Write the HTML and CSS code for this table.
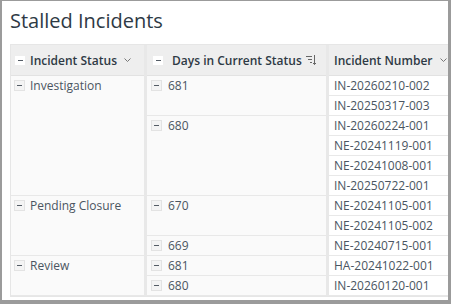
FILE: index.html
```html
<!DOCTYPE html>
<html>
<head>
<meta charset="utf-8">
<link rel="stylesheet" href="styles.css">
</head>
<body>
<div class="frame">
  <h1 class="title">Stalled Incidents</h1>
  <div class="grid">
    <div class="hd c1"><span class="tog"></span><span class="hd-label">Incident Status</span><svg class="chev" width="7" height="4" viewBox="0 0 7 4"><polyline points="0.5,0.5 3.5,3.5 6.5,0.5" fill="none" stroke="#777" stroke-width="1"/></svg></div>
    <div class="hd c2"><span class="tog"></span><span class="hd-label">Days in Current Status</span><svg class="sort" width="11" height="12" viewBox="0 0 11 12"><path d="M0 2.5H6M2 5.5H6M4 8.5H6" stroke="#666" stroke-width="1" fill="none"/><path d="M8.5 1V10.5M7 9L8.5 10.5L10 9" stroke="#666" stroke-width="1" fill="none"/></svg></div>
    <div class="hd c3"><span class="hd-label">Incident Number</span><svg class="chev3" width="7" height="4" viewBox="0 0 7 4"><polyline points="0.5,0.5 3.5,3.5 6.5,0.5" fill="none" stroke="#777" stroke-width="1"/></svg></div>

    <div class="cell c1 s6"><span class="tog"></span><span>Investigation</span></div>
    <div class="cell c1 s3"><span class="tog"></span><span>Pending Closure</span></div>
    <div class="cell c1 s2"><span class="tog"></span><span>Review</span></div>

    <div class="cell c2 s2"><span class="tog"></span><span>681</span></div>
    <div class="cell c2 s4"><span class="tog"></span><span>680</span></div>
    <div class="cell c2 s2"><span class="tog"></span><span>670</span></div>
    <div class="cell c2"><span class="tog"></span><span>669</span></div>
    <div class="cell c2"><span class="tog"></span><span>681</span></div>
    <div class="cell c2"><span class="tog"></span><span>680</span></div>

    <div class="cell c3">IN-20260210-002</div>
    <div class="cell c3">IN-20250317-003</div>
    <div class="cell c3">IN-20260224-001</div>
    <div class="cell c3">NE-20241119-001</div>
    <div class="cell c3">NE-20241008-001</div>
    <div class="cell c3">IN-20250722-001</div>
    <div class="cell c3">NE-20241105-001</div>
    <div class="cell c3">NE-20241105-002</div>
    <div class="cell c3">NE-20240715-001</div>
    <div class="cell c3">HA-20241022-001</div>
    <div class="cell c3">IN-20260120-001</div>
  </div>
</div>
</body>
</html>
```
FILE: styles.css
```css
html, body {
  margin: 0;
  padding: 0;
  background: #ffffff;
}
body {
  font-family: "Open Sans", "Noto Sans", sans-serif;
}
.frame {
  width: 451px;
  height: 304px;
  box-sizing: border-box;
  border-style: solid;
  border-color: #9b9b9b;
  border-width: 1px 3px 4px 2px;
  padding: 0 0 0 8px;
  overflow: hidden;
  background: #ffffff;
}
.title {
  margin: 6px 0 9px 0;
  font-size: 20px;
  font-weight: 400;
  line-height: 28px;
  color: #2e3a45;
}
.grid {
  display: grid;
  grid-template-columns: 133px 179px 1fr;
  grid-template-rows: 31px;
  grid-auto-rows: 20px;
  grid-auto-flow: row dense;
  column-gap: 3px;
  background: #e8e8e8;
  border: 1px solid #e6e6e6;
  border-right: 0;
}
.c1 { grid-column: 1; }
.c2 { grid-column: 2; }
.c3 { grid-column: 3; }
.s2 { grid-row: span 2; }
.s3 { grid-row: span 3; }
.s4 { grid-row: span 4; }
.s6 { grid-row: span 6; }

.hd {
  grid-row: 1;
  box-sizing: border-box;
  background: #eeeeee;
  border-bottom: 1px solid #e2e2e2;
  display: flex;
  align-items: center;
  font-size: 12px;
  font-weight: 600;
  color: #2f3a45;
  white-space: nowrap;
}
.hd .tog {
  width: 10px;
  height: 9px;
  margin-top: 0;
  background: #ffffff;
  border: 0;
}
.hd.c1 { padding-left: 4px; }
.hd.c1 .hd-label { margin-left: 5px; }
.hd.c1 .chev { margin-left: auto; margin-right: 13px; }
.hd.c2 { padding-left: 6px; }
.hd.c2 .hd-label { margin-left: 9px; }
.hd.c2 .sort { margin-left: auto; margin-right: 9px; }
.hd.c3 { padding-left: 5px; }
.hd.c3 .chev3 { margin-left: 7px; }

.cell {
  box-sizing: border-box;
  background: #fafafa;
  border-bottom: 1px solid #e8e8e8;
  display: flex;
  align-items: flex-start;
  font-size: 12px;
  line-height: 19px;
  color: #4a5561;
  white-space: nowrap;
}
.cell.c1 { padding-left: 3px; }
.cell.c1 .tog { margin-right: 5px; }
.cell.c2 { padding-left: 4px; }
.cell.c2 .tog { margin-right: 6px; }
.cell.c3 {
  padding-left: 5px;
  background: #ffffff;
}

.tog {
  position: relative;
  flex: none;
  box-sizing: border-box;
  width: 11px;
  height: 11px;
  margin-top: 4px;
  background: #f4f4f4;
  border: 1px solid #e3e3e3;
  display: flex;
  align-items: center;
  justify-content: center;
}
.tog::before {
  content: "";
  width: 5px;
  height: 1px;
  background: #555d66;
}
```
